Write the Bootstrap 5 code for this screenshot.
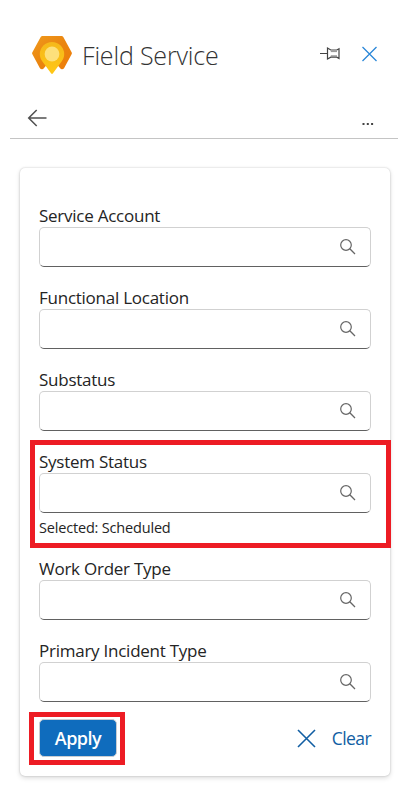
<!DOCTYPE html>
<html lang="en">
<head>
<meta charset="utf-8">
<meta name="viewport" content="width=device-width, initial-scale=1">
<title>Field Service</title>
<link href="https://cdn.jsdelivr.net/npm/bootstrap@5.3.0/dist/css/bootstrap.min.css" rel="stylesheet">
<style>
body{font-family:"Segoe UI","Open Sans","Noto Sans",sans-serif;color:#242424;background:#fff;width:414px;height:808px;overflow:hidden}
svg{display:block;fill:none}
.pane-head{height:96px;padding:14px 36px 0 32px}
.pane-title{font-size:25px;font-weight:300;line-height:36px;letter-spacing:-.18px;margin-left:10px;color:#333}
.pane-nav{height:43px;margin:0 16px 0 10px;padding:1px 24px 0 17px;border-bottom:1px solid #c4c4c4}
.more{margin-top:13px}
.filter-card{margin:29px 24px 0 20px;height:608px;padding:36px 19px 0;border:0;border-radius:5px;box-shadow:0 0 2px rgba(0,0,0,.22),0 2px 5px rgba(0,0,0,.14)}
.field{height:82px}
.field.has-note{height:107px}
.field label{display:block;height:23px;line-height:24px;font-size:17px;letter-spacing:-.25px;white-space:nowrap}
.lookup{height:40px;border:1px solid #d1d1d1;border-bottom-color:#616161;border-radius:5px;padding-right:13px}
.lookup input{height:36px;outline:0}
.note{font-size:14.5px;line-height:20px;letter-spacing:-.18px;margin-top:5px}
.actions{margin-top:-2px}
.btn-apply{width:78px;height:38px;padding:0;background:#0f6cbd;color:#fff;border:1px solid #c9cdd2;border-radius:5px;font-weight:600;font-size:18px;letter-spacing:-.5px;line-height:34px}
.btn-clear{height:38px;padding:0;border:0;color:#115ea3;font-size:17.5px;letter-spacing:-.6px;line-height:38px}
.callout{position:absolute;border:5px solid #ed1c24;pointer-events:none}
.callout-status{left:-9px;right:-20px;top:-10px;height:108px}
.callout-apply{left:-10px;top:-7px;width:96px;height:53px}
</style>
</head>
<body>
<svg width="0" height="0" class="position-absolute"><symbol id="search" viewBox="0 0 18 18"><circle cx="7" cy="7" r="5.3" stroke="#666" stroke-width="1.2"/><path d="M10.8 10.8 16 16" stroke="#666" stroke-width="1.3"/></symbol></svg>
<header class="pane-head d-flex align-items-center">
  <svg width="40" height="40" viewBox="0 0 40 40">
    <defs>
      <linearGradient id="hex" x1="0" y1="0" x2="1" y2="1"><stop stop-color="#f09a1c"/><stop offset=".5" stop-color="#ea8510"/><stop offset="1" stop-color="#ee7d08"/></linearGradient>
      <linearGradient id="pin" x1="0" y1="0" x2="0" y2="1"><stop stop-color="#f5b81b"/><stop offset="1" stop-color="#ffc715"/></linearGradient>
    </defs>
    <path d="M10.5 1h19q1.2 0 1.8 1l8.3 15.2q.6 1 0 2L32.2 33q-.8 1.3-2.2 1.3-1.2 0-2-1.3L20 24l-8 9q-.8 1.3-2 1.3-1.4 0-2.2-1.3L.4 19.2q-.6-1 0-2L8.7 2q.6-1 1.8-1z" fill="url(#hex)"/>
    <path d="M20 7a12.2 12.2 0 0 1 12.2 12.2c0 3-1.2 5.2-2.6 7.4L21 38.3q-1 1.4-2 0l-8.6-11.7c-1.4-2.2-2.6-4.4-2.6-7.4A12.2 12.2 0 0 1 20 7z" fill="url(#pin)"/>
    <circle cx="20" cy="19" r="7.4" fill="#fde07b"/>
  </svg>
  <h1 class="pane-title mb-0 flex-grow-1">Field Service</h1>
  <svg class="me-3 mb-1" width="22" height="16" viewBox="0 0 22 16" stroke="#444" stroke-width="1.2"><path d="M1 8.5h7M8.5 3v11l3.3-1.8h6l2.2 1.3V3.7L17.8 5h-6z"/><path d="M11.8 6.6h6.2M11.8 10.8h6.2" stroke-width=".6"/></svg>
  <svg class="ms-1 mb-1" width="17" height="18" viewBox="0 0 17 18" stroke="#2b88d8" stroke-width="1.3"><path d="m1.5 3 14 14m0-14-14 14"/></svg>
</header>
<nav class="pane-nav d-flex justify-content-between align-items-center">
  <svg width="20" height="18" viewBox="0 0 20 18" stroke="#505050" stroke-width="1.5"><path d="M19.5 9H1.5M9.7 1 1.7 9l8 8"/></svg>
  <svg class="more" width="12" height="4" viewBox="0 0 12 4"><path d="M.5 1h2v2h-2zm4.3 0h2v2h-2zm4.3 0h2v2h-2z" fill="#444"/></svg>
</nav>
<main class="card filter-card">
  <div class="field"><label for="f1">Service Account</label><div class="lookup d-flex align-items-center"><input id="f1" class="flex-grow-1 border-0 bg-transparent"><svg width="18" height="18"><use href="#search"/></svg></div></div>
  <div class="field"><label for="f2">Functional Location</label><div class="lookup d-flex align-items-center"><input id="f2" class="flex-grow-1 border-0 bg-transparent"><svg width="18" height="18"><use href="#search"/></svg></div></div>
  <div class="field"><label for="f3">Substatus</label><div class="lookup d-flex align-items-center"><input id="f3" class="flex-grow-1 border-0 bg-transparent"><svg width="18" height="18"><use href="#search"/></svg></div></div>
  <div class="field has-note position-relative"><label for="f4">System Status</label><div class="lookup d-flex align-items-center"><input id="f4" class="flex-grow-1 border-0 bg-transparent"><svg width="18" height="18"><use href="#search"/></svg></div><div class="note">Selected: Scheduled</div><div class="callout callout-status"></div></div>
  <div class="field"><label for="f5">Work Order Type</label><div class="lookup d-flex align-items-center"><input id="f5" class="flex-grow-1 border-0 bg-transparent"><svg width="18" height="18"><use href="#search"/></svg></div></div>
  <div class="field"><label for="f6">Primary Incident Type</label><div class="lookup d-flex align-items-center"><input id="f6" class="flex-grow-1 border-0 bg-transparent"><svg width="18" height="18"><use href="#search"/></svg></div></div>
  <div class="d-flex justify-content-between position-relative actions">
    <button class="btn btn-apply">Apply</button>
    <button class="btn btn-clear d-flex align-items-center"><svg width="19" height="19" viewBox="0 0 19 19" class="me-3" stroke="#115ea3" stroke-width="1.6"><path d="m1 1 17 17M18 1 1 18"/></svg>Clear</button>
    <div class="callout callout-apply"></div>
  </div>
</main>
<script src="https://cdn.jsdelivr.net/npm/bootstrap@5.3.0/dist/js/bootstrap.bundle.min.js"></script>
</body>
</html>
